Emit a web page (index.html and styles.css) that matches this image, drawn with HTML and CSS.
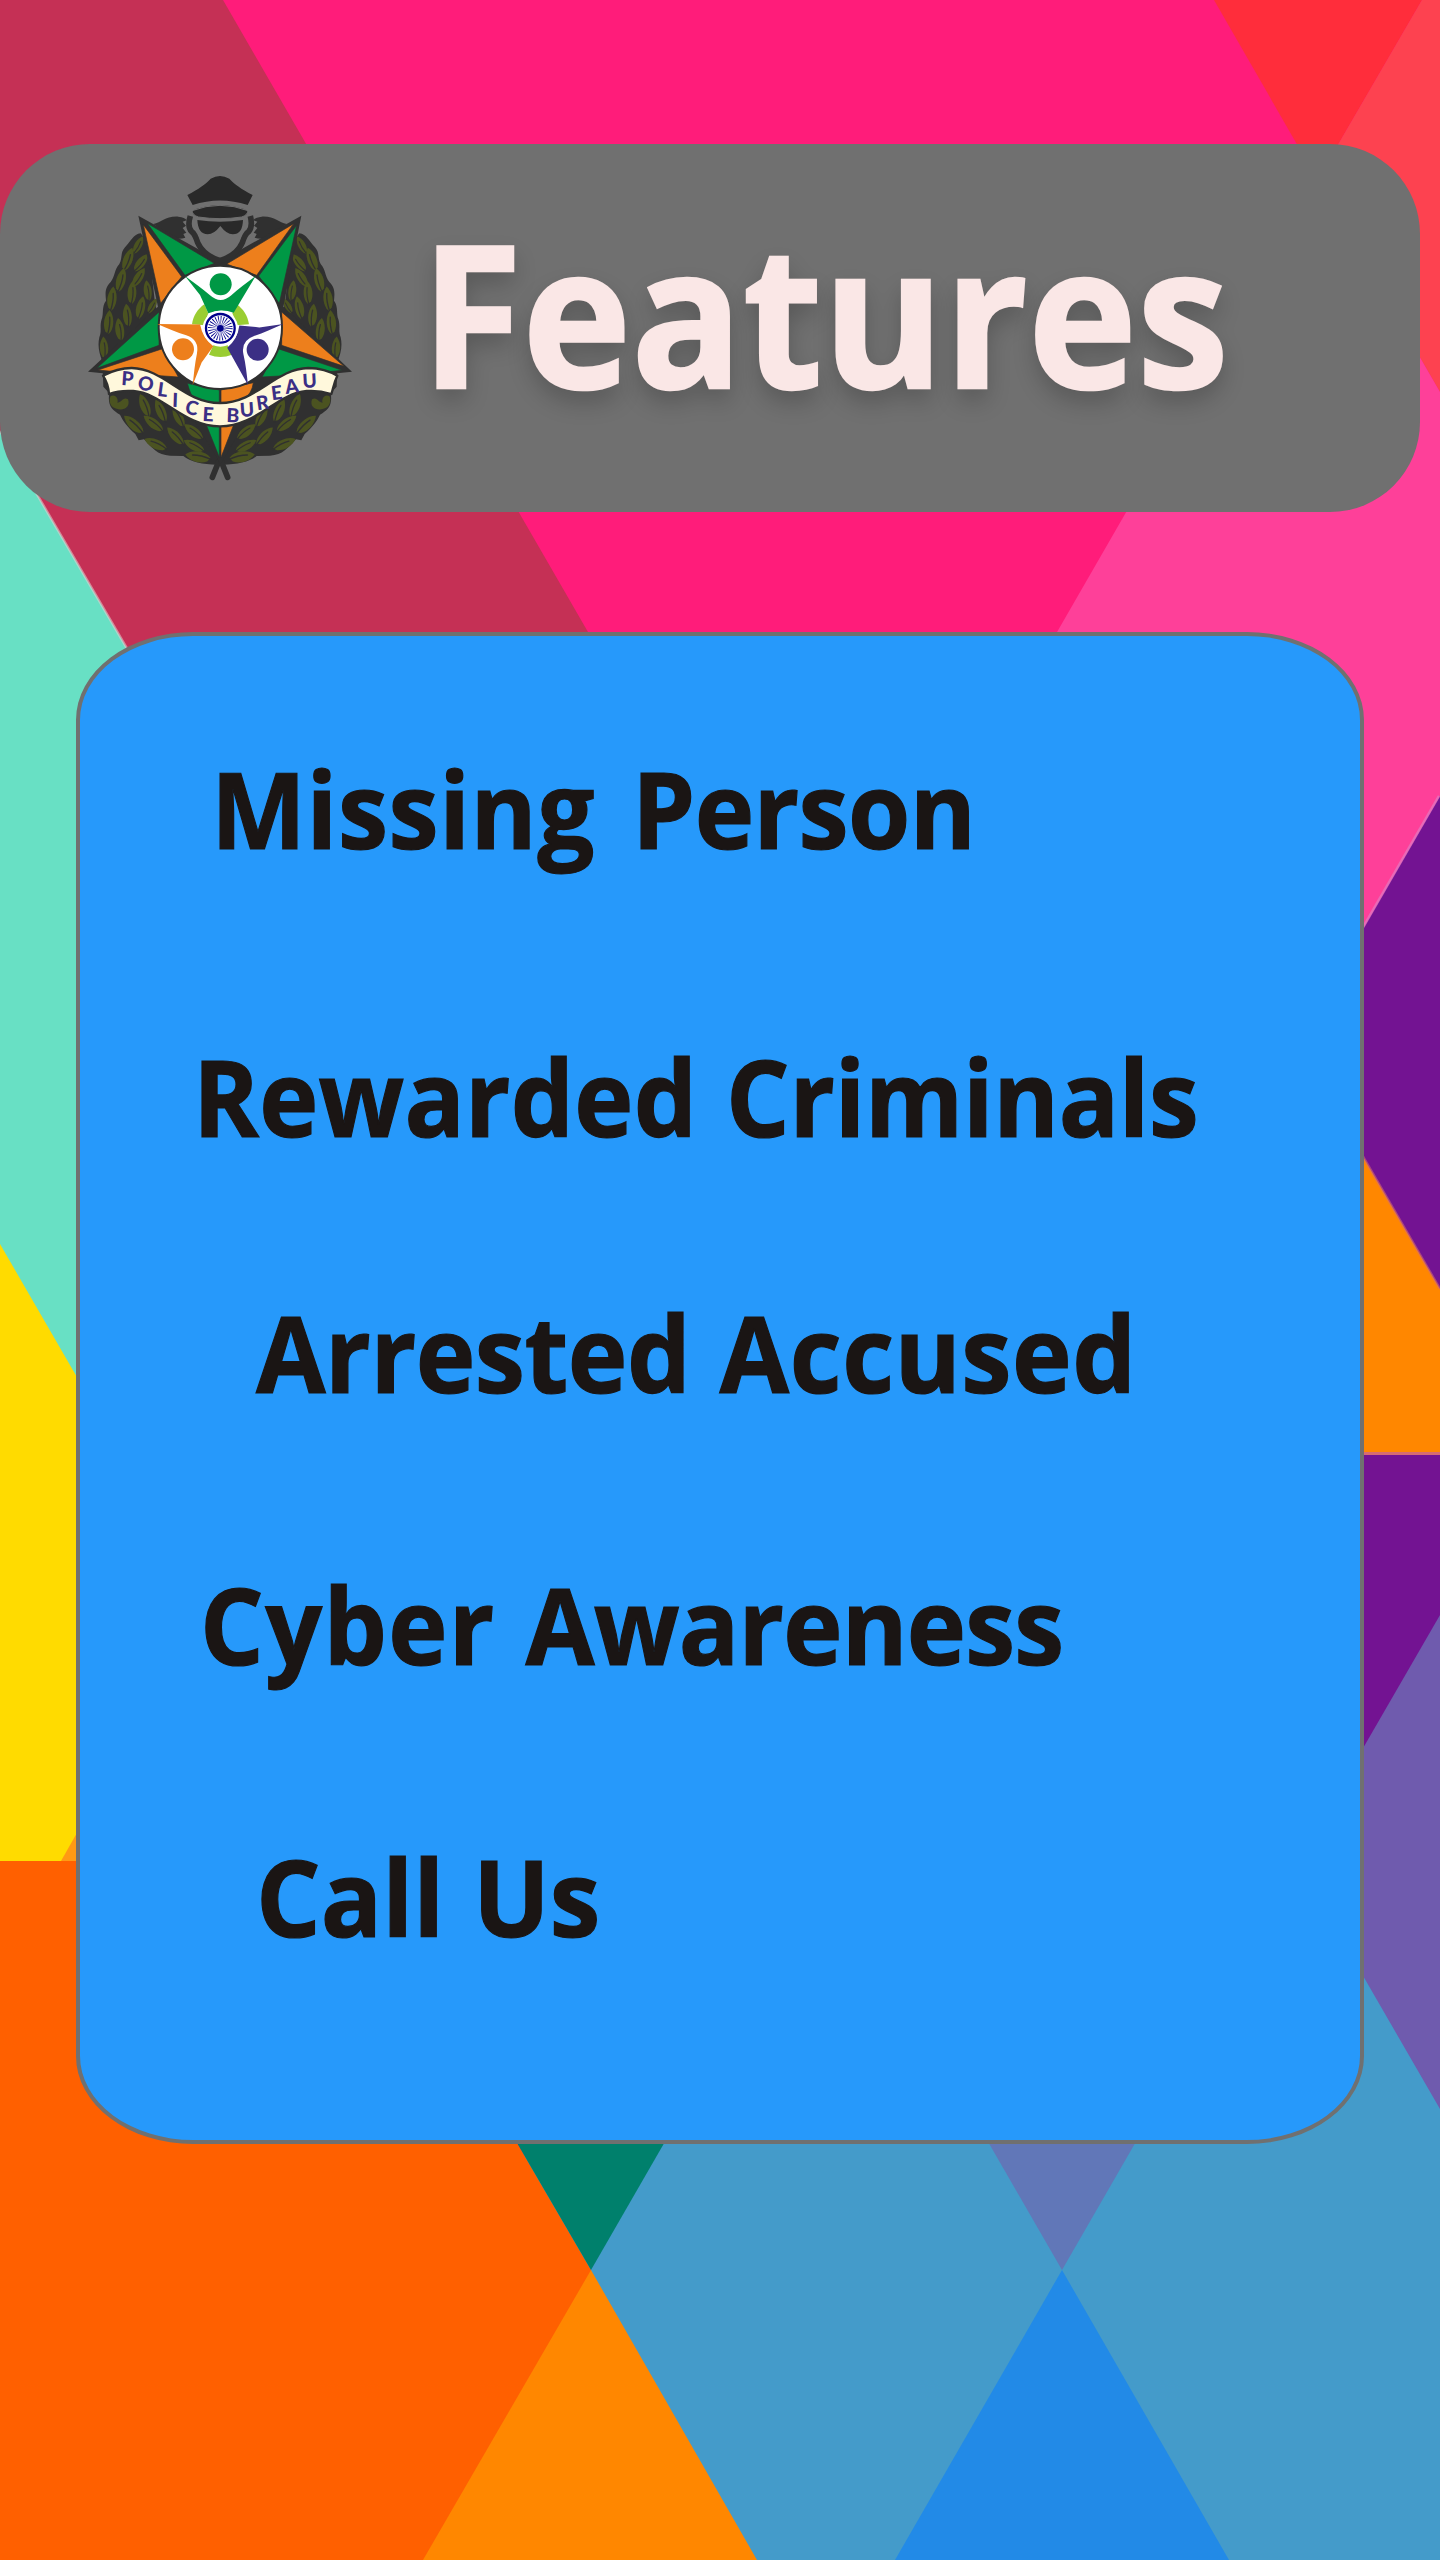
FILE: index.html
```
<!DOCTYPE html>
<html lang="en">
<head>
<meta charset="utf-8">
<title>Features</title>
<link rel="stylesheet" href="styles.css">
</head>
<body>
<div class="screen">
  <svg class="backdrop" viewBox="0 0 1440 2560" aria-hidden="true">
    <rect width="1440" height="2560" fill="#ff1c7a"/>
    <path fill="#c53055" d="M0 0H223L588 632V700H0Z"/>
    <path fill="#ff2d3b" d="M1214 0H1422L1317.500 180Z"/>
    <path fill="#fd4250" d="M1422 0H1440V392L1317.500 180Z"/>
    <path fill="#fe4099" d="M1317.500 180L1440 392V1300H1300V800L1000 731Z"/>
    <path fill="#68e0c4" d="M0 431L160 705V1600H0Z"/>
    <path fill="#ffdb00" d="M0 1244L100 1417V1861H0Z"/>
    <path fill="#ff9a14" d="M61 1861L90 1810V1861Z"/>
    <path fill="#731392" d="M1440 796L1340 969V1800H1440Z"/>
    <path fill="#ff8700" d="M1440 1289L1340 1117V1454H1440Z"/>
    <path fill="#d66c72" d="M1340 1452H1440V1455H1340Z"/>
    <path fill="#6f5bae" d="M1440 1615L1340 1788V2140H1440Z"/>
    <path fill="#449bca" d="M500 2100H1340V1936L1440 2109V2560H700Z"/>
    <path fill="#ff6000" d="M0 1861H120V2100H492L591 2270V2560H0Z"/>
    <path fill="#00806c" d="M492 2100H689L591 2270Z"/>
    <path fill="#ff8700" d="M591 2270L423 2560H757Z"/>
    <path fill="#6177b8" d="M964 2100H1160L1062 2270Z"/>
    <path fill="#228ae7" d="M1062 2270L895 2560H1229Z"/>
    <g fill="none" stroke-width="2.500" opacity=".55">
      <path stroke="#e5d0d0" d="M0 431L160 705"/>
      <path stroke="#d88ad0" d="M1439 796L1339 969"/>
      <path stroke="#d66c72" d="M1440 1289L1340 1117"/>
    </g>
  </svg>

  <header class="header">
    <svg class="badge" viewBox="0 0 900 1020" role="img" aria-label="Police Bureau badge">
      <defs>
        <g id="leaf">
          <path fill="#4b5320" d="M0-37C15-22 18 8 8 28L2 36L-8 28C-19 6-14-20 0-37Z"/>
          <path fill="none" stroke="#303030" stroke-width="4" stroke-linecap="round" d="M2-16Q6 8-1 38"/>
        </g>
        <g id="wreath">
          <path fill="#303030" d="M212 220C190 222 182 245 165 262C150 278 158 295 148 312C132 330 136 348 122 366C104 384 106 400 108 422C94 440 102 462 95 478C88 500 96 512 88 532C82 560 88 580 97 605L100 680L118 700C112 735 125 750 150 764C160 785 172 800 196 822L206 841L222 838C245 862 262 886 300 887L340 888C360 905 400 914 440 914L450 900V690L300 600L255 430L235 250Z"/>
          <path fill="none" stroke="#303030" stroke-width="17" stroke-linecap="round" d="M446 905L427 952"/>
          <path fill="#303030" d="M250 192C275 188 285 168 325 170Q345 172 350 181L338 185L348 197L338 204L349 218L340 222L346 233Q335 237 322 236L300 228Z"/>
          <use href="#leaf" transform="translate(205 255) rotate(28) scale(.8)"/>
          <use href="#leaf" transform="translate(174 298) rotate(20)"/>
          <use href="#leaf" transform="translate(213 308) rotate(38) scale(.9)"/>
          <use href="#leaf" transform="translate(153 360) rotate(14)"/>
          <use href="#leaf" transform="translate(206 352) rotate(32) scale(.9)"/>
          <use href="#leaf" transform="translate(186 398) rotate(3) scale(.95)"/>
          <use href="#leaf" transform="translate(126 416) rotate(6)"/>
          <use href="#leaf" transform="translate(233 392) rotate(-8) scale(.85)"/>
          <use href="#leaf" transform="translate(212 443) rotate(12) scale(.95)"/>
          <use href="#leaf" transform="translate(172 466) rotate(-6) scale(.95)"/>
          <use href="#leaf" transform="translate(116 487) rotate(4)"/>
          <use href="#leaf" transform="translate(247 438) rotate(30) scale(.7)"/>
          <use href="#leaf" transform="translate(149 509) rotate(-8) scale(.95)"/>
          <use href="#leaf" transform="translate(102 563) rotate(-4) scale(.9)"/>
          <path fill="#4b5320" d="M122 708C140 700 146 722 142 728C154 728 160 708 174 718C184 748 150 756 128 741C118 732 117 718 122 708Z"/>
          <use href="#leaf" transform="translate(224 736) rotate(-22)"/>
          <use href="#leaf" transform="translate(272 752) rotate(-24)"/>
          <use href="#leaf" transform="translate(191 793) rotate(-48) scale(1.050)"/>
          <use href="#leaf" transform="translate(250 790) rotate(-52)"/>
          <use href="#leaf" transform="translate(325 770) rotate(-28) scale(.95)"/>
          <use href="#leaf" transform="translate(316 828) rotate(-44) scale(.95)"/>
          <use href="#leaf" transform="translate(371 815) rotate(-52) scale(.95)"/>
          <use href="#leaf" transform="translate(257 852) rotate(-66)"/>
          <use href="#leaf" transform="translate(372 857) rotate(-62) scale(.95)"/>
          <use href="#leaf" transform="translate(384 890) rotate(-80) scale(1.150 1.050)"/>
        </g>
        <path id="person" d="M345 348C372 368 398 386 420 406Q452 434 484 406C505 386 530 368 557 348L491 458Q452 444 415 460L390 405Z"/>
      </defs>

      <use href="#wreath"/>
      <use href="#wreath" transform="matrix(-1 0 0 1 900 0)"/>

      <path fill="#303030" d="M205 167L450 304L694 167L640 440L846 635L600 660L452 912L300 660L54 635L264 440Z"/>
      <path fill="none" stroke="#303030" stroke-width="17" stroke-linejoin="round" d="M361 168Q351 200 365 215Q375 222 383 248C395 275 418 292 450 302C482 292 505 275 517 248Q525 222 536 215Q549 200 541 168"/>
      <path fill="#707070" d="M373 178Q383 235 404 262Q422 280 450 287Q478 280 496 262Q517 235 529 178Z"/>
      <path fill="#292929" d="M352 105C385 88 410 70 422 56Q450 40 478 56C490 70 515 88 548 105L533 135Q450 108 368 135Z"/>
      <path fill="#292929" stroke="#707070" stroke-width="3" d="M366 152Q450 120 534 152Q532 166 515 171Q450 181 385 171Q368 166 366 152Z"/>
      <path fill="#292929" d="M382 180Q450 190 519 180Q518 223 488 223Q470 223 451 198Q432 223 413 223Q384 222 382 180Z"/>

      <g stroke="#303030" stroke-width="2">
        <path fill="#ed7f1c" d="M220 194L335 350L272 430Z"/>
        <path fill="#009845" d="M232 190L433 310L345 346Z"/>
        <path fill="#ed7f1c" d="M671 191L470 312L560 346Z"/>
        <path fill="#009845" d="M680 196L566 348L628 430Z"/>
        <path fill="#009845" d="M267 456V556L80 625Z"/>
        <path fill="#ed7f1c" d="M84 630L278 566L325 651L240 645Z"/>
        <path fill="#ed7f1c" d="M635 456V556L822 619Z"/>
        <path fill="#009845" d="M817 631L624 566L576 651L680 645Z"/>
        <path fill="#009845" d="M352 670L448 690V892L395 760Q362 710 352 670Z"/>
        <path fill="#ed7f1c" d="M550 668L453 690V892L520 720Q546 700 550 668Z"/>
      </g>

      <circle cx="451" cy="502" r="185" fill="#fff" stroke="#303030" stroke-width="6"/>
      <g fill="#9acd32">
        <path d="M366 493C370 467 383 447 403 433L415 460Q407 475 405 496Z"/>
        <path d="M537 493C533 467 520 447 500 433L487 460Q496 475 498 496Z"/>
        <path d="M417 584L430 556Q451 564 473 556L486 584Q451 598 417 584Z"/>
      </g>
      <g fill="#009845"><circle cx="452" cy="373" r="33"/><use href="#person"/></g>
      <g fill="#ed7f1c"><circle cx="339" cy="568" r="33"/><use href="#person" transform="rotate(240 451 505)"/></g>
      <g fill="#3b2f85"><circle cx="563" cy="569" r="33"/><use href="#person" transform="rotate(120 451 505)"/></g>
      <circle cx="451" cy="505" r="53" fill="#fff"/>
      <circle cx="451" cy="505" r="43" fill="none" stroke="#00008b" stroke-width="7"/>
      <circle cx="451" cy="505" r="21" fill="none" stroke="#00008b" stroke-width="32" stroke-dasharray="1.800 3.698"/>
      <circle cx="451" cy="505" r="10" fill="#00008b"/>

      <path fill="#fff8dc" stroke="#303030" stroke-width="7" stroke-linejoin="round" d="M99 647C125 633 155 624 185 624C285 626 340 729 450 729C560 729 615 626 715 624Q765 625 802 647C790 672 790 685 784 702Q745 690 710 693C620 700 560 799 450 799C340 799 280 700 190 693Q150 690 117 702C116 682 112 667 99 647Z"/>
      <text class="motto" x="153 200 260 306 343 397 440 469 511 562 606 648 698" y="675 686 707 740 760 783 783 786 771 751 721 702 684" rotate="4 12 8 2 12 3 0 2 -4 -8 -7 -8 -3">POLICE BUREAU</text>
    </svg>
    <h1 class="title">Features</h1>
  </header>

  <main class="panel">
    <ul class="menu">
      <li class="item item-missing"><span class="label"><span class="first">Missing</span> <span class="last">Person</span></span></li>
      <li class="item item-rewarded"><span class="label"><span class="first">Rewarded</span> <span class="last">Criminals</span></span></li>
      <li class="item item-arrested"><span class="label"><span class="first">Arrested</span> <span class="last">Accused</span></span></li>
      <li class="item item-cyber"><span class="label"><span class="first">Cyber</span> <span class="last">Awareness</span></span></li>
      <li class="item item-call"><span class="label">Call Us</span></li>
    </ul>
  </main>
</div>
</body>
</html>
```
FILE: styles.css
```
* {
  box-sizing: border-box;
}

body {
  margin: 0;
  font-family: "Open Sans", "Noto Sans", sans-serif;
}

.screen {
  position: relative;
  isolation: isolate;
  width: 1440px;
  height: 2560px;
  padding-top: 144px;
  overflow: hidden;
}

.backdrop {
  position: absolute;
  inset: 0;
  z-index: -1;
  width: 100%;
  height: 100%;
}

.header {
  display: flex;
  align-items: flex-start;
  width: 1420px;
  height: 368px;
  padding-left: 70px;
  border-radius: 90px;
  background: #707070;
}

.badge {
  flex: none;
  width: 300px;
  height: 340px;
  margin-top: 16px;
}

.motto {
  fill: #3b2f85;
  font-family: Lato, sans-serif;
  font-size: 58px;
  font-weight: 900;
}

.title {
  margin: 47px 0 0 50.5px;
  color: #fae7e6;
  font-size: 198px;
  font-weight: 700;
  line-height: 240px;
  text-shadow: 0 12px 24px rgba(0, 0, 0, 0.22);
  -webkit-text-stroke: 2.5px #fae7e6;
  transform: scaleX(0.932);
  transform-origin: left;
}

.panel {
  width: 1288px;
  height: 1512px;
  margin: 120px 0 0 76px;
  padding-top: 100px;
  border: 4px solid #707070;
  border-radius: 117px / 88px;
  background: #2699fb;
}

.menu {
  margin: 0;
  padding: 0;
  list-style: none;
}

.item {
  height: 144px;
  color: #1a1514;
  font-size: 106px;
  font-weight: 700;
  line-height: 144px;
  white-space: nowrap;
  -webkit-text-stroke: 1.2px #1a1514;
}

.label {
  display: inline-block;
  transform-origin: left;
}

.item-missing {
  padding-left: 131.3px;
}

.item-missing .label {
  word-spacing: 11.6px;
  transform: scaleX(0.95);
}

.item-missing .first {
  letter-spacing: 0.65px;
}

.item-missing .last {
  letter-spacing: -0.7px;
}

.item-rewarded {
  margin-top: 144px;
  padding-left: 113.2px;
}

.item-rewarded .label {
  word-spacing: 3.1px;
  transform: scaleX(0.943);
}

.item-rewarded .first {
  letter-spacing: 0.3px;
}

.item-rewarded .last {
  letter-spacing: -0.25px;
}

.item-arrested {
  margin-top: 112px;
  padding-left: 175.7px;
}

.item-arrested .label {
  word-spacing: 3.3px;
  transform: scaleX(0.952);
}

.item-arrested .first {
  letter-spacing: -0.54px;
}

.item-arrested .last {
  letter-spacing: 0.54px;
}

.item-cyber {
  margin-top: 128px;
  padding-left: 119.6px;
}

.item-cyber .label {
  word-spacing: 4.2px;
  transform: scaleX(0.945);
}

.item-cyber .first {
  letter-spacing: 1.4px;
}

.item-cyber .last {
  letter-spacing: -0.8px;
}

.item-call {
  margin-top: 128px;
  padding-left: 175.7px;
}

.item-call .label {
  word-spacing: 2.4px;
  transform: scaleX(0.959);
}
```
